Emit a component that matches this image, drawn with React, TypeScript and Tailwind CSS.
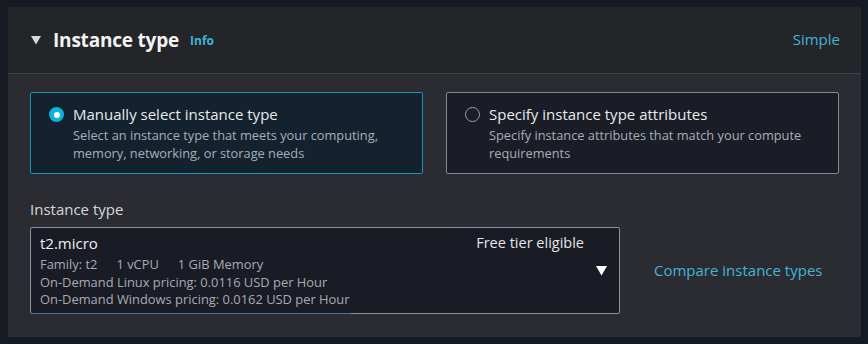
const Radio = ({ checked }: { checked: boolean }) =>
  checked ? (
    <span className="mt-[4px] flex h-[15px] w-[15px] shrink-0 items-center justify-center rounded-full bg-[#0ab3de]">
      <span className="h-[6px] w-[6px] rounded-full bg-white" />
    </span>
  ) : (
    <span className="mt-[4px] h-[15px] w-[15px] shrink-0 rounded-full border-[1.5px] border-[#9ba0a7]" />
  );

const Option = ({
  checked,
  title,
  desc,
}: {
  checked: boolean;
  title: string;
  desc: string;
}) => (
  <div
    className={
      checked
        ? "flex h-[82px] gap-[9px] rounded-[2px] border border-[#1796bd] bg-[#142230] px-[18px] pt-[10px]"
        : "flex h-[82px] gap-[9px] rounded-[2px] border border-[#858a92] bg-[#1a1d25] px-[18px] pt-[10px]"
    }
  >
    <Radio checked={checked} />
    <div>
      <div className="text-[15px] leading-[23px] text-[#e8eaec]">{title}</div>
      <div className="text-[12.8px] leading-[18px] text-[#a9aeb5]">{desc}</div>
    </div>
  </div>
);

const App = () => {
  return (
    <div className="h-[344px] w-[868px] bg-[#161a22] pl-[8px] pt-[7px] font-['Open_Sans',sans-serif]">
      <section className="w-[853px] bg-[#2a2c32]">
        <header className="flex h-[67px] items-center justify-between border-b border-[#3d4047] bg-[#232529] pl-[23px] pr-[21px]">
          <div className="flex items-center">
            <svg width="10" height="9" viewBox="0 0 10 9" className="mr-[12px]">
              <path d="M0 0H10L5 8.5Z" fill="#d5d8dc" />
            </svg>
            <h2 className="text-[19px] font-bold tracking-[-0.2px] text-[#f2f3f4]">Instance type</h2>
            <span className="ml-[11px] mt-[2px] text-[12px] font-bold text-[#40b4d9]">Info</span>
          </div>
          <span className="pb-[2px] text-[15px] text-[#45b3d8]">Simple</span>
        </header>

        <div className="px-[22px] pb-[23px] pt-[18px]">
          <div className="grid grid-cols-2 gap-[23px]">
            <Option
              checked
              title="Manually select instance type"
              desc="Select an instance type that meets your computing, memory, networking, or storage needs"
            />
            <Option
              checked={false}
              title="Specify instance type attributes"
              desc="Specify instance attributes that match your compute requirements"
            />
          </div>

          <div className="mt-[25px] text-[15px] leading-[21px] text-[#d5d8dc]">Instance type</div>

          <div className="mt-[7px] flex items-center gap-[34px]">
            <div className="relative h-[87px] w-[590px] rounded-[2px] border border-[#8c9199] bg-[#191c24] pl-[9px] pr-[13px] pt-[4px]">
              <div className="flex justify-between pr-[22px]">
                <span className="text-[15px] leading-[22px] text-[#eef0f1]">t2.micro</span>
                <span className="text-[14.5px] leading-[22px] text-[#e3e5e8]">Free tier eligible</span>
              </div>
              <div className="mt-[2px] text-[12.9px] leading-[17.5px] text-[#a7acb3]">
                <div className="flex gap-[19px]">
                  <span>Family: t2</span>
                  <span>1 vCPU</span>
                  <span>1 GiB Memory</span>
                </div>
                <div>On-Demand Linux pricing: 0.0116 USD per Hour</div>
                <div>On-Demand Windows pricing: 0.0162 USD per Hour</div>
              </div>
              <svg
                width="11"
                height="10"
                viewBox="0 0 11 10"
                className="absolute right-[12px] top-[38px]"
              >
                <path d="M0 0H11L5.5 9.5Z" fill="#ffffff" />
              </svg>
              <div className="absolute -bottom-px left-0 h-px w-[320px] bg-[#2e7ea8]" />
            </div>
            <span className="text-[15px] text-[#45b3d8]">Compare instance types</span>
          </div>
        </div>
      </section>
    </div>
  );
};

export default App;
